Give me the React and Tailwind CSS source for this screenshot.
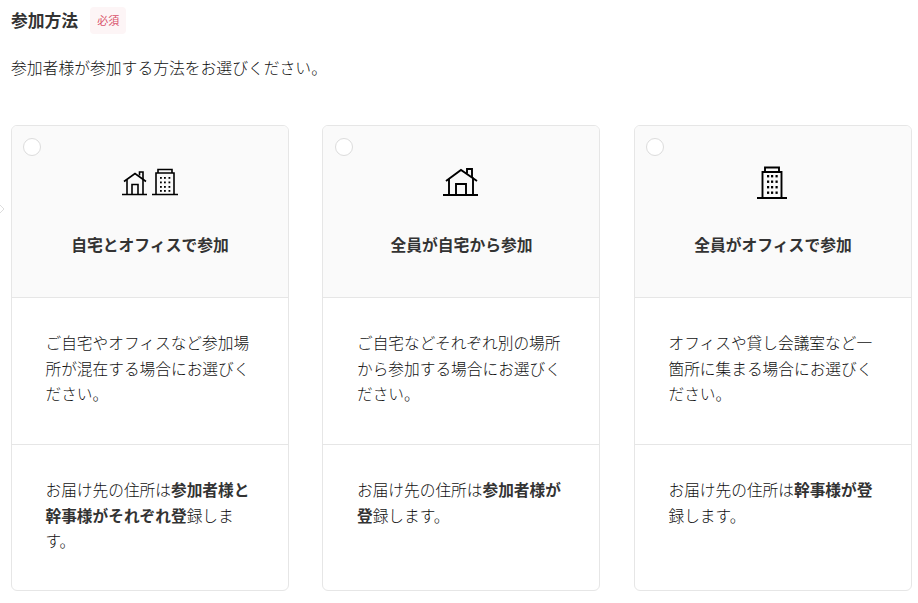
import React from "react";

const font = { fontFamily: '"Noto Sans CJK JP", "Noto Sans", sans-serif' };

function Icon({ type }) {
  if (type === "both") {
    return (
      <svg width="56" height="34" viewBox="0 0 56 34">
        <g fill="none" stroke="#000" strokeWidth="1.6">
          <path d="M2 15.5 L13 7.5 L24 15.5" />
          <path d="M17.5 9.5 V6 H21 V13" />
          <path d="M5 13.5 V28 M21 13.5 V28" />
          <path d="M10 28 V18.5 H16 V28" />
          <path d="M0 28.5 H25" />
          <path d="M36 7 V3.5 H50 V7" />
          <path d="M34 28 V7 H52 V28" />
          <path d="M30 28.5 H56" />
        </g>
        <g fill="#000">
          {[11, 15.5, 20, 24].map((y) =>
            [38, 42, 46.5].map((x) => <rect key={`${y}-${x}`} x={x} y={y} width="1.8" height="1.8" />)
          )}
        </g>
      </svg>
    );
  }
  if (type === "home") {
    return (
      <svg width="36" height="34" viewBox="0 0 36 34">
        <g fill="none" stroke="#000" strokeWidth="1.9">
          <path d="M3 15 L18 4 L34 15" />
          <path d="M24 7.5 V3 H29 V11.5" />
          <path d="M6 13 V29 M30 11.5 V29" />
          <path d="M13 29 V18 H23 V29" />
          <path d="M0 29 H35" />
        </g>
      </svg>
    );
  }
  return (
    <svg width="32" height="34" viewBox="0 0 32 34">
      <g fill="none" stroke="#000" strokeWidth="1.9">
        <path d="M8 6 V1.5 H22 V6" />
        <path d="M5.5 32 V6 H24.5 V32" />
        <path d="M0 32 H30" />
      </g>
      <g fill="#000">
        {[9, 14.5, 20, 25.5].map((y) =>
          [10, 14, 18.5].map((x) => <rect key={`${y}-${x}`} x={x} y={y} width="2.2" height="2.4" />)
        )}
      </g>
    </svg>
  );
}

const cards = [
  {
    icon: "both",
    title: "自宅とオフィスで参加",
    body: "ご自宅やオフィスなど参加場所が混在する場合にお選びください。",
    note: (
      <>
        お届け先の住所は<b className="font-bold text-[#333]">参加者様と幹事様がそれぞれ登</b>録します。
      </>
    ),
  },
  {
    icon: "home",
    title: "全員が自宅から参加",
    body: "ご自宅などそれぞれ別の場所から参加する場合にお選びください。",
    note: (
      <>
        お届け先の住所は<b className="font-bold text-[#333]">参加者様が登</b>録します。
      </>
    ),
  },
  {
    icon: "office",
    title: "全員がオフィスで参加",
    body: "オフィスや貸し会議室など一箇所に集まる場合にお選びください。",
    note: (
      <>
        お届け先の住所は<b className="font-bold text-[#333]">幹事様が登</b>録します。
      </>
    ),
  },
];

export default function App() {
  return (
    <div style={font} className="relative h-[603px] w-[918px] overflow-hidden bg-white text-[#333] pl-[11px] pt-[7px]">
      {/* page edge arrow */}
      <svg width="5" height="10" viewBox="0 0 5 10" className="absolute left-0 top-[204px]">
        <path d="M0 1 L4 5 L0 9" fill="none" stroke="#ddd" strokeWidth="1" />
      </svg>

      <div className="flex items-center h-[27px]">
        <h2 className="text-[16.8px] font-bold leading-none">参加方法</h2>
        <span className="ml-[12px] flex h-[27px] w-[36px] items-center justify-center rounded-[4px] bg-[#fdf5f6] text-[11px] text-[#d9536b]">
          必須
        </span>
      </div>

      <p className="mt-[21px] text-[15.8px] leading-[26px] font-light text-[#111]">参加者様が参加する方法をお選びください。</p>

      <div className="mt-[44px] flex gap-[33.49px]">
        {cards.map((card) => (
          <div key={card.title} className="relative w-[278px] h-[466px] overflow-hidden rounded-[6px] border border-[#e6e6e6]">
            <span className="absolute left-[11.3px] top-[12px] h-[18px] w-[18px] rounded-full border border-[#dcdcdc] bg-white" />
            <div className="flex h-[172px] flex-col items-center border-b border-[#e6e6e6] bg-[#fafafa] pt-[40px]">
              <div className="flex h-[34px] items-center justify-center">
                <Icon type={card.icon} />
              </div>
              <div className="mt-[32px] text-[15.8px] font-bold leading-[26px]">{card.title}</div>
            </div>
            <div className="h-[147px] border-b border-[#e6e6e6] px-[33.5px] pt-[32px] text-[15.7px] leading-[25.6px] font-light text-[#111]">
              {card.body}
            </div>
            <div className="px-[33.5px] pt-[32px] text-[15.7px] leading-[25.6px] font-light text-[#111]">{card.note}</div>
          </div>
        ))}
      </div>
    </div>
  );
}
